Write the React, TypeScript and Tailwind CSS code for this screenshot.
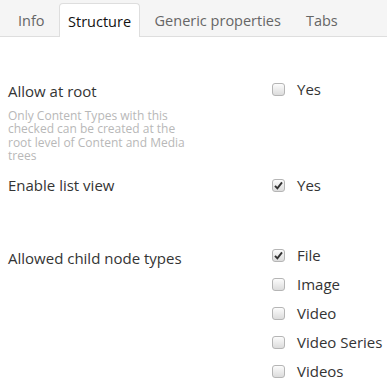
const tabs = ["Info", "Structure", "Generic properties", "Tabs"];

function Check({ checked }: { checked?: boolean }) {
  return (
    <span className="flex h-[13px] w-[13px] items-center justify-center rounded-[3px] border border-[#b5b5b5] bg-gradient-to-b from-[#fcfcfc] to-[#dcdcdc]">
      {checked && (
        <svg width="9" height="9" viewBox="0 0 9 9">
          <path d="M1 4.8 L3.4 7.4 L8 1.4" fill="none" stroke="#333" strokeWidth="1.9" />
        </svg>
      )}
    </span>
  );
}

function Option({ label, checked }: { label: string; checked?: boolean }) {
  return (
    <div className="flex h-[29px] items-center gap-[12px]">
      <Check checked={checked} />
      <span className="text-[15px] text-[#343434]">{label}</span>
    </div>
  );
}

export default function App() {
  return (
    <div className="h-[387px] w-[387px] bg-white font-['Open_Sans',sans-serif]">
      <div className="flex h-[37px] items-end gap-[4px] border-b border-[#dedede] bg-[#f5f5f5] pl-[7.5px]">
        {tabs.map((t) => (
          <div
            key={t}
            className={
              t === "Structure"
                ? "-mb-px flex h-[34px] items-center rounded-t-[4px] border border-b-0 border-[#dedede] bg-white px-[8px] pt-[3px] text-[14.5px] text-[#111]"
                : "flex h-[34px] items-center px-[10.5px] pt-[3px] text-[14.5px] text-[#666]"
            }
          >
            {t}
          </div>
        ))}
      </div>
      <div className="pl-[8px] pt-[41px]">
        <div className="flex">
          <div className="w-[264px]">
            <div className="text-[15px] leading-[26px] text-[#343434]">Allow at root</div>
            <div className="mt-[5px] w-[182px] text-[12px] leading-[13.4px] text-[#b8b8b8]">
              Only Content Types with this checked can be created at the root level of Content and Media trees
            </div>
          </div>
          <div className="-mt-[3px]">
            <Option label="Yes" />
          </div>
        </div>
        <div className="mt-[9px] flex">
          <div className="w-[264px] text-[15px] leading-[26px] text-[#343434]">Enable list view</div>
          <div className="-mt-[1px]">
            <Option label="Yes" checked />
          </div>
        </div>
        <div className="mt-[44px] flex">
          <div className="w-[264px] text-[15px] leading-[29px] text-[#343434]">Allowed child node types</div>
          <div className="-mt-[3px]">
            <Option label="File" checked />
            <Option label="Image" />
            <Option label="Video" />
            <Option label="Video Series" />
            <Option label="Videos" />
          </div>
        </div>
      </div>
    </div>
  );
}
